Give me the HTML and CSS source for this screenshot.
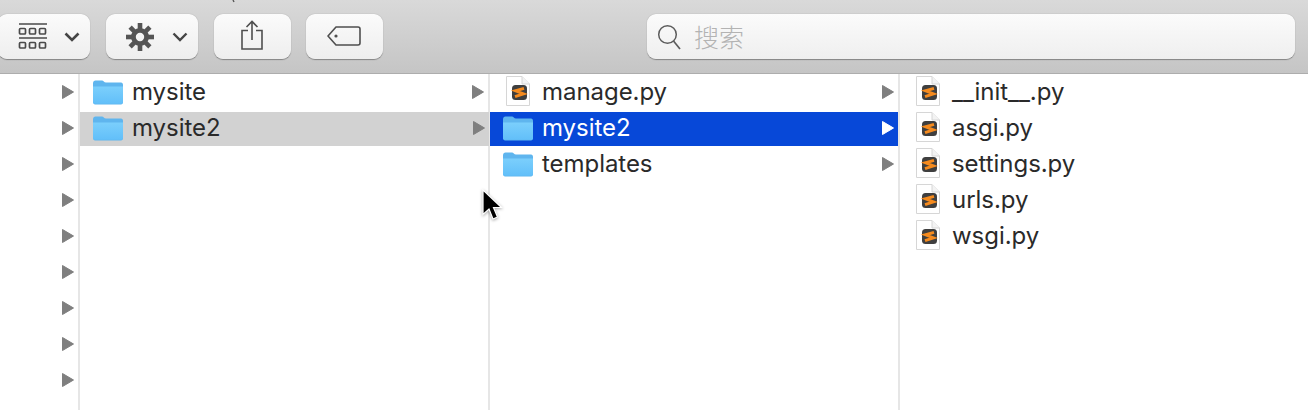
FILE: index.html
```html
<!DOCTYPE html>
<html lang="zh">
<head>
<meta charset="utf-8">
<title>Finder</title>
<link rel="stylesheet" href="styles.css">
</head>
<body>
<svg class="defs" width="0" height="0" aria-hidden="true">
  <defs>
    <linearGradient id="fg" x1="0" y1="0" x2="0" y2="1"><stop offset="0" stop-color="#7bcffc"/><stop offset="1" stop-color="#62bff9"/></linearGradient>
    <symbol id="folder" viewBox="0 0 32 26">
      <path d="M1 3.500C1 1.500 2 .5 3.500 .5H10C11.500 .5 12 2.500 14 2.500H29C30.300 2.500 31 3.500 31 5V22C31 23.500 30.300 24.500 29 24.500H3C2 24.500 1 23.500 1 22Z" fill="#5fb5ee"/>
      <path d="M1 6.500H31V22C31 23.200 30.300 23.800 29 23.800H3C1.800 23.800 1 23.200 1 22Z" fill="url(#fg)"/>
    </symbol>
    <symbol id="pyfile" viewBox="0 0 26 32">
      <path d="M1.500 .5H17L24.500 8V29.500H1.500Z" fill="#fff" stroke="#d6d6d6"/>
      <path d="M17 .5V8H24.500" fill="#f3f3f3" stroke="#d6d6d6"/>
      <rect x="7" y="9" width="15" height="15" rx="3.500" fill="#3f3f3f"/>
      <path d="M19 12.400 10.600 14.800 18.400 17.800 10 20.600" fill="none" stroke="#f68b1e" stroke-width="3"/>
    </symbol>
    <symbol id="tri" viewBox="0 0 12 14"><path d="M.5 .5 11.500 7 .5 13.500Z" stroke-width="1" stroke-linejoin="round"/></symbol>
  </defs>
</svg>

<header class="toolbar">
  <svg class="title-clip" width="8" height="3" viewBox="0 0 8 3"><path d="M3 0 4 2" fill="none" stroke="#555" stroke-width="1.400"/></svg>
  <div class="tool tool-view">
    <svg width="30" height="27" viewBox="0 0 30 27"><path d="M1 1H29M1 15H29" stroke="#4a4a4a" stroke-width="1.700" fill="none"/><g fill="none" stroke="#4a4a4a" stroke-width="1.700"><rect x="1.500" y="5.500" width="6" height="5.500" rx="1"/><rect x="11.500" y="5.500" width="6" height="5.500" rx="1"/><rect x="21.500" y="5.500" width="6" height="5.500" rx="1"/><rect x="1.500" y="19.500" width="6" height="5.500" rx="1"/><rect x="11.500" y="19.500" width="6" height="5.500" rx="1"/><rect x="21.500" y="19.500" width="6" height="5.500" rx="1"/></g></svg>
    <svg width="16" height="10" viewBox="0 0 16 10"><path d="M1.500 1.500 8 8 14.500 1.500" fill="none" stroke="#454545" stroke-width="2.600"/></svg>
  </div>
  <div class="tool tool-gear">
    <svg width="28" height="28" viewBox="0 0 28 28"><g fill="#555"><path fill-rule="evenodd" d="M14 5A9 9 0 1 1 14 23 9 9 0 1 1 14 5ZM14 9.800A4.200 4.200 0 1 0 14 18.200 4.200 4.200 0 1 0 14 9.800Z"/><rect x="11.700" y="0" width="4.600" height="6"/><rect x="11.700" y="22" width="4.600" height="6"/><rect x="0" y="11.700" width="6" height="4.600"/><rect x="22" y="11.700" width="6" height="4.600"/><rect x="11.700" y="0" width="4.600" height="6" transform="rotate(45 14 14)"/><rect x="11.700" y="22" width="4.600" height="6" transform="rotate(45 14 14)"/><rect x="0" y="11.700" width="6" height="4.600" transform="rotate(45 14 14)"/><rect x="22" y="11.700" width="6" height="4.600" transform="rotate(45 14 14)"/></g></svg>
    <svg width="16" height="10" viewBox="0 0 16 10"><path d="M1.500 1.500 8 8 14.500 1.500" fill="none" stroke="#454545" stroke-width="2.400"/></svg>
  </div>
  <div class="tool tool-share">
    <svg width="22" height="30" viewBox="0 0 22 30"><path d="M7 10.500H1V29H21V10.500H15M11 20V1.500M5.500 7 11 1.500 16.500 7" fill="none" stroke="#4f4f4f" stroke-width="1.600"/></svg>
  </div>
  <div class="tool tool-tag">
    <svg width="34" height="20" viewBox="0 0 34 20"><path d="M9 1H31C32.200 1 33 1.800 33 3V17C33 18.200 32.200 19 31 19H9L1 10Z" fill="none" stroke="#4f4f4f" stroke-width="1.600" stroke-linejoin="round"/><circle cx="9" cy="10" r="1.600" fill="#4f4f4f"/></svg>
  </div>
  <div class="search">
    <svg width="26" height="26" viewBox="0 0 26 26"><circle cx="10.500" cy="10.500" r="8.800" fill="none" stroke="#5c5c5c" stroke-width="1.500"/><path d="M16.500 17 23 25" stroke="#5c5c5c" stroke-width="1.700" fill="none"/></svg>
    <span class="search-text">搜索</span>
  </div>
</header>

<main class="browser">
  <section class="col col-0">
    <div class="row"><svg class="tri"><use href="#tri"/></svg></div>
    <div class="row"><svg class="tri"><use href="#tri"/></svg></div>
    <div class="row"><svg class="tri"><use href="#tri"/></svg></div>
    <div class="row"><svg class="tri"><use href="#tri"/></svg></div>
    <div class="row"><svg class="tri"><use href="#tri"/></svg></div>
    <div class="row"><svg class="tri"><use href="#tri"/></svg></div>
    <div class="row"><svg class="tri"><use href="#tri"/></svg></div>
    <div class="row"><svg class="tri"><use href="#tri"/></svg></div>
    <div class="row"><svg class="tri"><use href="#tri"/></svg></div>
  </section>
  <section class="col col-1">
    <div class="row"><svg class="folder"><use href="#folder"/></svg><span class="name">mysite</span><svg class="tri"><use href="#tri"/></svg></div>
    <div class="row row-inactive"><svg class="folder"><use href="#folder"/></svg><span class="name">mysite2</span><svg class="tri"><use href="#tri"/></svg></div>
  </section>
  <section class="col col-2">
    <div class="row"><svg class="pyfile"><use href="#pyfile"/></svg><span class="name">manage.py</span><svg class="tri"><use href="#tri"/></svg></div>
    <div class="row row-active"><svg class="folder"><use href="#folder"/></svg><span class="name">mysite2</span><svg class="tri"><use href="#tri"/></svg></div>
    <div class="row"><svg class="folder"><use href="#folder"/></svg><span class="name">templates</span><svg class="tri"><use href="#tri"/></svg></div>
  </section>
  <section class="col col-3">
    <div class="row"><svg class="pyfile"><use href="#pyfile"/></svg><span class="name">__init__.py</span></div>
    <div class="row"><svg class="pyfile"><use href="#pyfile"/></svg><span class="name">asgi.py</span></div>
    <div class="row"><svg class="pyfile"><use href="#pyfile"/></svg><span class="name">settings.py</span></div>
    <div class="row"><svg class="pyfile"><use href="#pyfile"/></svg><span class="name">urls.py</span></div>
    <div class="row"><svg class="pyfile"><use href="#pyfile"/></svg><span class="name">wsgi.py</span></div>
  </section>
  <svg class="cursor" width="22" height="34" viewBox="0 0 22 34"><path d="M1 1V25.500L7 20 11 30 15.500 28 11.500 18.500H19.500Z" fill="#000" stroke="#fff" stroke-width="1.200"/></svg>
</main>
</body>
</html>
```
FILE: styles.css
```css
* { box-sizing: border-box; }
html, body { margin: 0; padding: 0; height: 100%; overflow: hidden; background: #fff; }
body { font-family: Inter, "Noto Sans CJK SC", sans-serif; color: #2a2a2a; }
.defs { position: absolute; }

.toolbar {
  position: relative;
  height: 74px;
  display: flex;
  align-items: flex-start;
  padding: 14px 13px 0 0;
  background: linear-gradient(#d9d9d9, #c5c5c5);
  border-bottom: 1px solid #adadad;
}
.title-clip { position: absolute; left: 230px; top: 0; }
.tool {
  height: 45px;
  display: flex;
  align-items: center;
  background: linear-gradient(#fbfbfb, #eeeeee);
  border-radius: 9px;
  box-shadow: 0 .5px 1px rgba(0,0,0,.35);
  flex: none;
}
.tool-view { width: 92px; margin-left: -2px; padding: 0 10px 0 20px; justify-content: space-between; }
.tool-gear { width: 92px; margin-left: 16px; padding: 0 10px 0 20px; justify-content: space-between; }
.tool-share { width: 77px; margin-left: 16px; justify-content: center; padding: 0 2px 4px 0; }
.tool-tag { width: 77px; margin-left: 15px; justify-content: center; padding: 0 1px 2px 0; }
.search {
  flex: 1;
  height: 45px;
  margin-left: 264px;
  display: flex;
  align-items: center;
  gap: 11px;
  padding-left: 10px;
  background: linear-gradient(#fbfbfb, #efefef);
  border-radius: 9px;
  box-shadow: 0 .5px 1px rgba(0,0,0,.35);
}
.search-text { font-size: 25px; line-height: 30px; color: #b3b3b3; font-family: "Noto Sans CJK SC", sans-serif; font-weight: 300; position: relative; top: -1px; }

.browser { position: relative; display: flex; height: 336px; }
.col { padding-top: 2px; display: flex; flex-direction: column; gap: 2px; border-right: 2px solid #e6e6e6; flex: none; }
.col-0 { width: 80px; }
.col-1, .col-2 { width: 410px; }
.col-3 { flex: 1; border-right: 0; }

.row { height: 34px; display: flex; align-items: center; position: relative; font-size: 24px; }
.col-0 .row { justify-content: flex-end; padding-right: 4px; }
.col-1 .row, .col-2 .row { padding-right: 4px; }
.folder { width: 32px; height: 26px; margin-left: 12px; margin-right: 8px; flex: none; position: relative; top: -.5px; }
.pyfile { width: 26px; height: 32px; margin-left: 15px; margin-right: 11px; flex: none; position: relative; top: -1px; }
.name { flex: 1; line-height: 32px; letter-spacing: -.05px; position: relative; top: -1px; }
.tri { width: 12px; height: 14px; fill: #7f7f7f; stroke: #7f7f7f; flex: none; position: relative; top: -1px; }
.row-inactive { background: #d2d2d2; margin-right: -1px; }
.row-active { background: #0748d8; color: #fff; }
.row-active .tri { fill: #fff; stroke: #fff; }
.cursor { position: absolute; left: 482px; top: 115px; filter: drop-shadow(0 1px 1.500px rgba(0,0,0,.35)); }
```
